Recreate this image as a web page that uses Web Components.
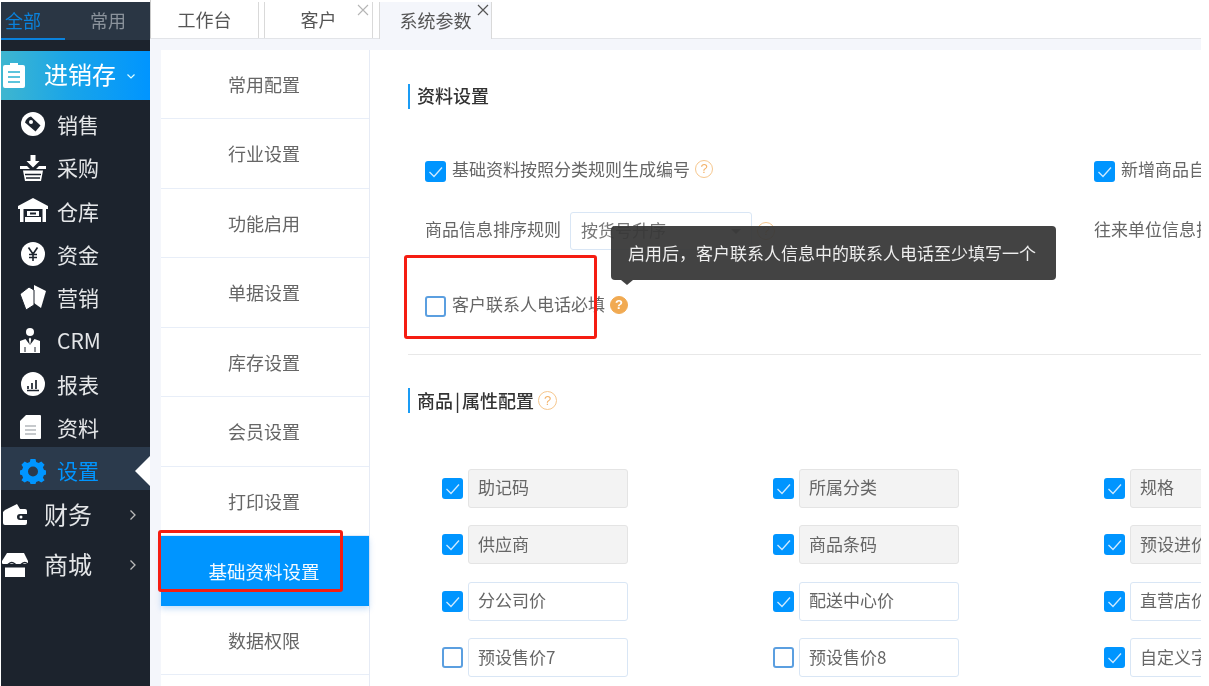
<!DOCTYPE html>
<html lang="zh">
<head>
<meta charset="utf-8">
<title>系统参数</title>
<style>
  html, body { margin: 0; height: 686px; overflow: hidden; background: #fff; }
  body { font-family: "Noto Sans CJK SC", "Liberation Sans", sans-serif; color: #666; filter: blur(.5px); }
</style>
</head>
<body>
<erp-app></erp-app>

<script>
const ICONS = {
  clipboard: '<path d="M3 3h5V1h8v2h5a2 2 0 0 1 2 2v19a2 2 0 0 1-2 2H3a2 2 0 0 1-2-2V5a2 2 0 0 1 2-2z" fill="#fff"/><path d="M6 10h12M6 15h12M6 20h12" stroke="#5cc4dc" stroke-width="2"/>',
  sale: '<circle cx="13" cy="12" r="12" fill="#fff"/><path d="M5 10.500A8.500 8.500 0 0 1 11 4.500L20.500 13.500 15.500 19.500z" fill="#1c232d"/><circle cx="11" cy="10" r="2" fill="#fff"/>',
  buy: '<path d="M10.500 0h5v6h4l-6.500 6.500L6.500 6h4z" fill="#fff"/><path d="M0 11h7l3 3h6l3-3h7v3H0zM3 15.500h20L21 26H5z" fill="#fff"/><path d="M5 19.500h16M6 23h14" stroke="#1c232d" stroke-width="1.300"/>',
  store: '<path d="M13 0L-2 8v3H0v13h3.500V11h19v13H26V11h2V8z" fill="#fff"/><path d="M7 13h12v5H7zM5 19h16v5H5z" fill="#fff"/><path d="M10 15.500h6" stroke="#1c232d" stroke-width="2"/>',
  money: '<circle cx="13" cy="13" r="12" fill="#fff"/><path d="M8.500 6.500L13 13l4.500-6.500M13 13v7M9 13.500h8M9 16.500h8" fill="none" stroke="#1c232d" stroke-width="1.600"/>',
  market: '<path d="M14 0l12 6-5 17-7-5z" fill="#fff"/><path d="M0 9l9-7 5 3 0 15-8 5z" fill="#fff" stroke="#1c232d" stroke-width="1"/>',
  crm: '<circle cx="10" cy="4" r="4" fill="#fff"/><path d="M0 13l5.500-2 4.500 6 4.500-6 5.500 2v12H0z" fill="#fff"/><path d="M10 9.500l-1.200 1.500 1.200 7 1.200-7z" fill="#fff"/><path d="M5 24v-5M15 24v-5" stroke="#1c232d" stroke-width="1"/>',
  report: '<circle cx="13" cy="13" r="12" fill="#fff"/><path d="M8 18v-3M12 18v-6M16 18V9M7 19.500h12" stroke="#1c232d" stroke-width="1.700"/>',
  doc: '<path d="M6 1h14a1 1 0 0 1 1 1v22a1 1 0 0 1-1 1H1a1 1 0 0 1-1-1V7z" fill="#fff"/><path d="M5 12h11M5 16h11M5 20h11" stroke="#8d9399" stroke-width="1.200"/>',
  gear: '<path fill-rule="evenodd" fill="#0095ff" d="M10.500 1h5l.7 3 2.500 1 2.600-1.600 3.300 3.300L22.900 9.300l1 2.500 2.100.7v4l-2.100.7-1 2.500 1.700 2.600-3.300 2.300-2.600-1.600-2.500 1-.7 2h-5l-.7-2-2.500-1-2.600 1.600L1.400 22.300l1.700-2.600-1-2.500-2.100-.7v-4l2.100-.7 1-2.500L1.400 6.700l3.300-3.300L7.300 5l2.500-1zM13 8.500a5 5 0 1 0 0 10 5 5 0 0 0 0-10z"/>',
  wallet: '<path d="M3 8l12-6 3 5h5a2 2 0 0 1 2 2v3h-7a3 3 0 0 0 0 6h7v3a2 2 0 0 1-2 2H3a2 2 0 0 1-2-2V10z" fill="#fff"/><circle cx="19" cy="15" r="1.500" fill="#fff"/>',
  shop: '<path d="M5 1h17l4 8v3H0V9z" fill="#fff"/><path d="M0 12q3.250 3 6.500 0t6.500 0 6.500 0 6.500 0" fill="none" stroke="#1c232d" stroke-width="1.400"/><path d="M3 15.500h20V25H3z" fill="#fff"/>'
};

function icon(name) {
  return `<svg width="26" height="26" viewBox="0 0 26 26" style="overflow:visible" aria-hidden="true">${ICONS[name]}</svg>`;
}

class SideItem extends HTMLElement {
  connectedCallback() {
    const big = this.hasAttribute('big');
    const active = this.hasAttribute('active');
    const arrow = this.getAttribute('arrow');
    this.attachShadow({ mode: 'open' }).innerHTML = `
      <style>
        :host { display: flex; align-items: center; position: relative; box-sizing: border-box;
          height: ${this.getAttribute('h')}px; padding-left: ${big ? 1 : 19}px; color: #e4e6e8;
          font-size: ${big ? 24 : 21}px; background: ${active ? '#2b3a4c' : 'transparent'}; }
        :host([head]) { background: linear-gradient(90deg, #3fb6cf 0%, #1aa5e8 45%, #0095ff 100%); color: #fff; padding-bottom: 1px; }
        :host([active]) { color: #0095ff; margin-top: -2px; padding-top: 4px; }
        svg { flex: none; display: block; }
        .label { margin-left: ${big ? 16 : 11}px; line-height: 1; ${big ? 'padding-bottom: 2px;' : ''} }
        .arrow { position: absolute; right: 12px; top: 50%; transform: translateY(-50%); }
        .notch { position: absolute; right: 0; top: 50%; margin-top: -13px; width: 0; height: 0;
          border: 15px solid transparent; border-left-width: 0; border-right: 15px solid #fff; }
      </style>
      ${icon(this.getAttribute('icon'))}
      <span class="label"><slot></slot></span>
      ${arrow === 'down' ? '<svg class="arrow" style="right:14px" width="10" height="10" viewBox="0 0 10 10"><path d="M1.500 3.500L5 7l3.500-3.500" fill="none" stroke="#dff" stroke-width="1.200"/></svg>' : ''}
      ${arrow === 'right' ? '<svg class="arrow" width="10" height="14" viewBox="0 0 10 14"><path d="M2.500 2.500L7 7l-4.500 4.500" fill="none" stroke="#bbb" stroke-width="1.300"/></svg>' : ''}
      ${active ? '<i class="notch"></i>' : ''}`;
  }
}
customElements.define('side-item', SideItem);

class AppSidebar extends HTMLElement {
  connectedCallback() {
    this.attachShadow({ mode: 'open' }).innerHTML = `
      <style>
        :host { display: block; flex: none; width: 149px; margin: 2px 0 0 1px; background: #1c232d; overflow: hidden; }
        .top { display: flex; height: 38px; background: #2a3644; font-size: 18px; }
        .top span { line-height: 36px; color: #8b939c; }
        .top .on { width: 64px; padding-left: 4px; box-sizing: border-box; color: #0a82dc; border-bottom: 2px solid #0a82dc; height: 38px; }
        .top .off { margin-left: 25px; }
        .menu { padding-top: 11px; }
        .sub { padding-top: 3px; }
      </style>
      <div class="top"><span class="on">全部</span><span class="off">常用</span></div>
      <div class="menu">
        <side-item big head icon="clipboard" arrow="down" h="49">进销存</side-item>
        <div class="sub">
          <side-item icon="sale" h="43.25">销售</side-item>
          <side-item icon="buy" h="43.25">采购</side-item>
          <side-item icon="store" h="43.25">仓库</side-item>
          <side-item icon="money" h="43.25">资金</side-item>
          <side-item icon="market" h="43.25">营销</side-item>
          <side-item icon="crm" h="43.25">CRM</side-item>
          <side-item icon="report" h="43.25">报表</side-item>
          <side-item icon="doc" h="43.25">资料</side-item>
          <side-item icon="gear" active h="43">设置</side-item>
        </div>
        <side-item big icon="wallet" arrow="right" h="50">财务</side-item>
        <side-item big icon="shop" arrow="right" h="50">商城</side-item>
      </div>`;
  }
}
customElements.define('app-sidebar', AppSidebar);

class TabBar extends HTMLElement {
  connectedCallback() {
    this.attachShadow({ mode: 'open' }).innerHTML = `
      <style>
        :host { display: flex; height: 39px; box-sizing: border-box; padding-top: 2px; gap: 5px;
          border-bottom: 1px solid #e2e4e8; border-left: 1px solid #c9c9c9; font-size: 18px; color: #555; }
        .tab { position: relative; display: flex; align-items: center; justify-content: center; box-sizing: border-box;
          height: 36px; padding-bottom: 2px; border-right: 1px solid #d9d9d9; }
        .tab + .tab { border-left: 1px solid #d9d9d9; }
        .tab.on { height: 37px; background: #f4f6fb; margin-left: 1px; }
        .x { position: absolute; right: 3px; top: 2px; width: 12px; height: 12px; }
        .on .x { right: 2px; }
      </style>
      <div class="tab" style="width:108px">工作台</div>
      <div class="tab" style="width:109px">客户
        <svg class="x" viewBox="0 0 12 12"><path d="M1 1l10 10M11 1L1 11" stroke="#b5b5b5" stroke-width="1.100"/></svg></div>
      <div class="tab on" style="width:113px">系统参数
        <svg class="x" viewBox="0 0 12 12"><path d="M1 1l10 10M11 1L1 11" stroke="#555" stroke-width="1.200"/></svg></div>`;
  }
}
customElements.define('tab-bar', TabBar);

class SettingsMenu extends HTMLElement {
  connectedCallback() {
    const items = ['常用配置', '行业设置', '功能启用', '单据设置', '库存设置', '会员设置', '打印设置', '基础资料设置', '数据权限'];
    this.attachShadow({ mode: 'open' }).innerHTML = `
      <style>
        :host { display: block; flex: none; width: 209px; box-sizing: border-box; margin: -.5px 0 0 11px; background: #fff;
          border-right: 1px solid #e6ebf5; font-size: 18px; color: #666; }
        div { height: 69.500px; box-sizing: border-box; padding-right: 2px; display: flex; align-items: center; justify-content: center;
          border-bottom: 1px solid #e8eef8; }
        .on { background: #0095ff; color: #f4faff; border-bottom: 0; box-shadow: 0 3px 6px rgba(0, 110, 220, .22);
          position: relative; font-size: 18.500px; }
      </style>
      ${items.map(t => `<div class="${t === '基础资料设置' ? 'on' : ''}">${t}</div>`).join('')}`;
  }
}
customElements.define('settings-menu', SettingsMenu);

class CheckMark extends HTMLElement {
  connectedCallback() {
    const on = this.hasAttribute('checked');
    this.attachShadow({ mode: 'open' }).innerHTML = `
      <style>
        :host { display: inline-block; flex: none; width: 21px; height: 21px; box-sizing: border-box; border-radius: 3px;
          background: ${on ? '#0095ff' : '#fff'}; border: ${on ? 0 : '2px solid #5b9fe0'}; }
        svg { display: block; }
      </style>
      ${on ? '<svg width="21" height="21" viewBox="0 0 21 21"><path d="M4.500 11l4.500 4.500 8-9" fill="none" stroke="#cfeaff" stroke-width="1.300"/></svg>' : ''}`;
  }
}
customElements.define('check-mark', CheckMark);

class HelpIcon extends HTMLElement {
  connectedCallback() {
    this.attachShadow({ mode: 'open' }).innerHTML = `
      <style>
        :host { display: inline-flex; flex: none; align-items: center; justify-content: center; box-sizing: border-box;
          width: 18px; height: 18px; border-radius: 50%; border: 1.500px solid #f6c78e; color: #f3b36b;
          font: 13px/1 "Liberation Sans", sans-serif; }
        :host([solid]) { background: #f1aa52; border-color: #f1aa52; color: #fff; font-weight: bold; }
      </style>?`;
  }
}
customElements.define('help-icon', HelpIcon);

class SectionTitle extends HTMLElement {
  connectedCallback() {
    this.attachShadow({ mode: 'open' }).innerHTML = `
      <style>
        :host { display: flex; align-items: center; height: 25px; box-sizing: border-box; gap: 4px; font-size: 18px;
          font-weight: 500; color: #333; border-left: 2px solid #1a9cf5; padding-left: 7px; }
      </style>
      <slot></slot>`;
  }
}
customElements.define('section-title', SectionTitle);

class FieldCheck extends HTMLElement {
  connectedCallback() {
    const locked = this.hasAttribute('locked');
    this.attachShadow({ mode: 'open' }).innerHTML = `
      <style>
        :host { display: flex; align-items: center; gap: 5px; width: 331px; height: 39px; }
        .box { width: 160px; flex: none; height: 39px; box-sizing: border-box; padding: 0 0 3px 9px; display: flex; align-items: center;
          border-radius: 3px; font-size: 17px; color: #666; white-space: nowrap; overflow: hidden;
          background: ${locked ? '#f3f3f3' : '#fff'}; border: 1px solid ${locked ? '#e4e4e4' : '#d9e6f5'}; }
      </style>
      <check-mark ${this.hasAttribute('off') ? '' : 'checked'}></check-mark>
      <div class="box"><slot></slot></div>`;
  }
}
customElements.define('field-check', FieldCheck);

class BasePanel extends HTMLElement {
  connectedCallback() {
    this.attachShadow({ mode: 'open' }).innerHTML = `
      <style>
        :host { display: block; flex: 1; min-width: 0; background: #fff; padding: 33.500px 0 0 38px; overflow: hidden; }
        .row { font-size: 17px; color: #666; white-space: nowrap; }
        .cols { margin-left: 17px; display: grid; grid-template-columns: 669px 1fr; }
        .r1 { height: 21px; margin-top: 51px; }
        .r2 { height: 38px; margin-top: 31px; }
        .r3 { height: 21px; margin-top: 45px; }
        .r1 span, .r3 span { line-height: 17px; padding-bottom: 6px; }
        .r2 span { line-height: 17px; padding-bottom: 4px; }
        .item { display: flex; align-items: center; gap: 6px; min-width: 0; height: 100%; }
        .sel { position: relative; box-sizing: border-box; width: 182px; height: 38px; margin-left: 9px; padding: 0 0 3px 10px;
          display: flex; align-items: center; border: 1px solid #d9e6f5; border-radius: 3px; color: #777; }
        .caret { position: absolute; right: 10px; top: 16px; width: 0; height: 0; border: 5px solid transparent; border-top-color: #777; border-bottom: 0; }
        hr { border: 0; border-top: 1px solid #e8e8e8; margin: 38px 0 0 0; }
        .t2 { margin-top: 33px; }
        .bar { margin: 0 2px; font-weight: inherit; }
        .t1 { padding-bottom: 2px; }
        .grid { display: grid; grid-template-columns: repeat(3, 331px); row-gap: 17.500px; margin: 56px 0 0 34px; width: 1000px; }
      </style>
      <section-title class="t1">资料设置</section-title>
      <div class="row cols r1">
        <div class="item"><check-mark checked></check-mark><span>基础资料按照分类规则生成编号</span><help-icon style="margin:-5px 0 0 -1px"></help-icon></div>
        <div class="item"><check-mark checked></check-mark><span>新增商品自动生成条码</span></div>
      </div>
      <div class="row cols r2">
        <div class="item" style="gap:0"><span>商品信息排序规则</span>
          <div class="sel">按货号升序<i class="caret"></i></div><help-icon style="margin-left:5px"></help-icon></div>
        <div class="item"><span>往来单位信息排序规则</span></div>
      </div>
      <div class="row cols r3">
        <div class="item"><check-mark></check-mark><span>客户联系人电话必填</span><help-icon solid style="margin:-3px 0 0 -1px"></help-icon></div>
      </div>
      <hr>
      <section-title class="t2"><b style="font-weight:inherit">商品<b class="bar">|</b>属性配置</b><help-icon style="width:19px;height:19px"></help-icon></section-title>
      <div class="grid">
        <field-check locked>助记码</field-check><field-check locked>所属分类</field-check><field-check locked>规格</field-check>
        <field-check locked>供应商</field-check><field-check locked>商品条码</field-check><field-check locked>预设进价</field-check>
        <field-check>分公司价</field-check><field-check>配送中心价</field-check><field-check>直营店价</field-check>
        <field-check off>预设售价7</field-check><field-check off>预设售价8</field-check><field-check>自定义字段</field-check>
      </div>`;
  }
}
customElements.define('base-panel', BasePanel);

class TipBubble extends HTMLElement {
  connectedCallback() {
    this.attachShadow({ mode: 'open' }).innerHTML = `
      <style>
        :host { position: absolute; left: 611px; top: 226px; width: 445px; height: 54px; box-sizing: border-box; padding: 0 0 2px 17px;
          display: flex; align-items: center; background: rgba(55, 55, 55, .94); color: #eee; border-radius: 4px;
          font-size: 17px; white-space: nowrap; }
        i { position: absolute; left: 10px; bottom: -5px; width: 0; height: 0; border: 6px solid transparent;
          border-top: 5px solid rgba(55, 55, 55, .94); border-bottom: 0; }
      </style>
      <slot></slot><i></i>`;
  }
}
customElements.define('tip-bubble', TipBubble);

class RedMark extends HTMLElement {
  connectedCallback() {
    this.attachShadow({ mode: 'open' }).innerHTML = `
      <style>
        :host { position: absolute; box-sizing: border-box; border: 3px solid #f51d12; border-radius: 3px; }
      </style>`;
  }
}
customElements.define('red-mark', RedMark);

class ErpApp extends HTMLElement {
  connectedCallback() {
    this.attachShadow({ mode: 'open' }).innerHTML = `
      <style>
        :host { display: flex; position: relative; width: 1201px; height: 686px; overflow: hidden; }
        .right { flex: 1; min-width: 0; display: flex; flex-direction: column; }
        .body { flex: 1; min-height: 0; display: flex; background: #f4f6fb; padding-top: 11px; }
      </style>
      <app-sidebar></app-sidebar>
      <div class="right">
        <tab-bar></tab-bar>
        <div class="body"><settings-menu></settings-menu><base-panel></base-panel></div>
      </div>
      <tip-bubble>启用后，客户联系人信息中的联系人电话至少填写一个</tip-bubble>
      <red-mark style="left:404px;top:255px;width:193px;height:84px"></red-mark>
      <red-mark style="left:158px;top:530px;width:185px;height:62px"></red-mark>`;
  }
}
customElements.define('erp-app', ErpApp);
</script>
</body>
</html>
